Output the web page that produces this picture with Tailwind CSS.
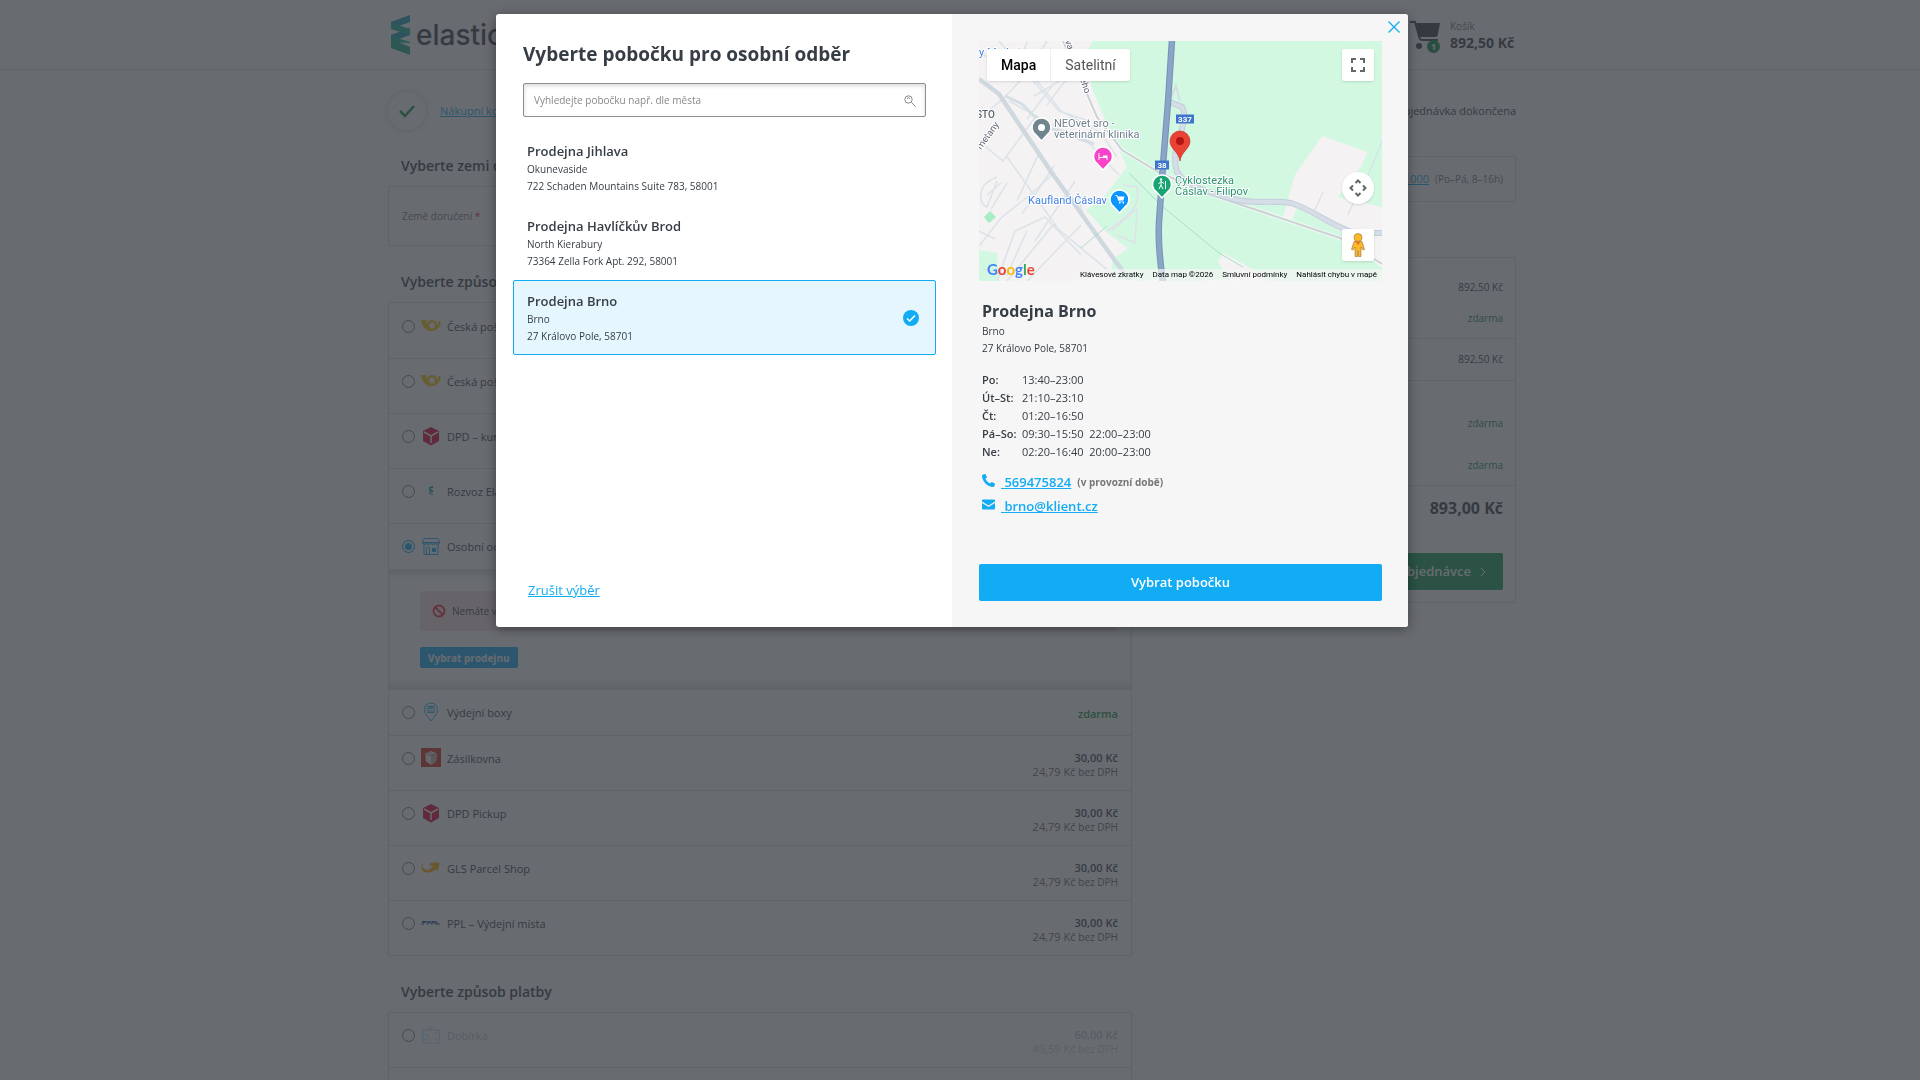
<!DOCTYPE html>
<html lang="cs">
<head>
  <meta charset="UTF-8" />
  <meta name="viewport" content="width=device-width, initial-scale=1.0" />
  <title>Doprava a platba</title>
  <script src="https://cdn.jsdelivr.net/npm/@tailwindcss/browser@4"></script>
</head>
<body class="h-screen overflow-hidden bg-white font-['Open_Sans','Noto_Sans',sans-serif] text-[11px] text-[#363d45]">

  <!-- Ikony dopravců -->
  <svg class="hidden">
    <symbol id="posta" viewBox="0 0 20 20"><path d="M0 4h5c.5 3 1 6 4 7l1 4C4 15 1 10 0 4z" fill="#ffc800"/><circle cx="11" cy="9.500" r="4.200" stroke="#ffc800" stroke-width="2.600" fill="none"/><path d="M13 13.500c4-1 5.500-4 5.500-8.500" stroke="#ffc800" stroke-width="2" fill="none"/></symbol>
    <symbol id="dpd" viewBox="0 0 20 20"><path d="M10 1l8 4v10l-8 4.500L2 15V5z" fill="#dc0032"/><path d="M3 6l7 4 7-4M10 10v7" stroke="#fff" stroke-width="1.500" fill="none"/></symbol>
    <symbol id="spirala" viewBox="0 0 20 20"><path d="M8 6l4-1v2l-4 1zM8 8l4 1v2l-4-1zM8 11l4-1v1l-4 1zM8 12l4 1v1l-4-1z" fill="#00a79d"/></symbol>
    <symbol id="obchod" viewBox="0 0 20 20"><path d="M3 2.500h14l1.500 4H1.500zM1.500 6.500c0 3 4 3 4 0 0 3 4.500 3 4.500 0 0 3 4.500 3 4.500 0 0 3 4 3 4 0M3 9v9.500h14V9M5.500 18v-5.500a1.500 1.500 0 0 1 3 0V18" stroke="#12acf4" fill="none"/><path d="M11 12h4v4h-4zM1.500 6h17v1.500h-17z" fill="#12acf4"/></symbol>
    <symbol id="box" viewBox="0 0 20 20"><path d="M10 19C6 14 3.500 11 3.500 7.500a6.500 6.500 0 0 1 13 0C16.500 11 14 14 10 19zM7 4.500h6v6H7zM9 4.500v2h2v-2M8.500 9h3" stroke="#12acf4" fill="none"/></symbol>
    <symbol id="zasilkovna" viewBox="0 0 20 20"><path d="M0 0h20v19H0z" fill="#d8281c"/><path d="M10 3l6 2.500-1 8-5 3.500-5-3.500-1-8z" fill="#f2eeee"/><path d="M10 8l6-2.500-1 8-5 3.500z" fill="#c9b3b1"/><path d="M4 5.500L10 8l6-2.500M7 4.200l6 2.600" stroke="#b55" stroke-width=".7" fill="none"/></symbol>
    <symbol id="gls" viewBox="0 0 20 20"><path d="M2 5C0 7-1 14.500 6 14.500h2c3 0 5-1.500 6.500-3L17 13l1.500-8.500H10l-2 3h4c-1.500 3-3.500 4.500-6 4.500C2.500 12 1 9 2 5z" fill="#ffb000"/></symbol>
    <symbol id="ppl" viewBox="0 0 20 20"><path d="M1 8.500h4l-.5 1H1M0 11h3M6 11.500l1-3h2.500l-.5 1.500H7M10.500 11.500l1-3H14l-.5 1.500H11M16 8.500l-1 2.500h4" stroke="#1b5a9c" stroke-width="1.200" fill="none"/></symbol>
    <symbol id="penezenka" viewBox="0 0 20 20"><path d="M2 5h16.500v13H2zM1 9.500h4a2 2 0 0 1 0 4.500H1zM6 5c0-3 4-3 4 0M10 4c1-3 5-2 5 1M14 8h2v2M16 13v2h-2" stroke="#12acf4" fill="none"/></symbol>
  </svg>

  <header class="h-[70px] border-b border-[#dfe1e3] pr-4">
    <div class="mx-auto flex h-full w-full max-w-[1128px] items-center justify-between">
      <a href="#" class="ml-[3px] flex items-center gap-1.5">
        <svg class="h-10 w-[19px]" viewBox="0 0 19 40"><path d="M0 7L19 0v7L0 14zM0 20l19-7v7L0 27z" fill="#12a0b8"/><path d="M0 8l19 6v6L0 14z" fill="#14b4a0"/><path d="M0 21l19 6v1L0 27z" fill="#14b4a0"/><path d="M0 24l19 8v8L0 33z" fill="#1bb08e"/></svg>
        <span class="font-[Inter] text-[28px] leading-8 font-medium">elastic</span>
      </a>
      <div class="flex w-[107px] items-center gap-2">
        <div class="relative">
          <svg class="h-9 w-[33px]" viewBox="0 0 33 36"><path d="M1 5h5l4 14c.5 3 1 4 4 4h15" stroke="#363d45" stroke-width="2" fill="none"/><path d="M6 6h25l-2 11c-.5 2-1 3-3 3H10z" fill="#363d45"/><circle cx="10" cy="29" r="3" fill="#363d45"/></svg>
          <span class="absolute right-0.5 bottom-0 grid size-[13px] place-items-center rounded-full bg-[#0c8a4b] text-[9px] font-bold text-white">1</span>
        </div>
        <div class="shrink-0 whitespace-nowrap">
          <div class="text-[10px] leading-4 text-[#777]">Košík</div>
          <div class="text-[14px] leading-[18px] font-bold">892,50 Kč</div>
        </div>
      </div>
    </div>
  </header>

  <div class="pr-4">
  <main class="mx-auto w-full max-w-[1128px] pt-[22px]">
    <div class="flex items-center justify-between">
      <div class="flex items-center gap-[14px]">
        <span class="grid size-[38px] place-items-center rounded-full bg-white shadow-[0_0_6px_#00000030]">
          <svg class="size-4" viewBox="0 0 16 16"><path d="M1 8l5 5L15 3" stroke="#12913f" stroke-width="2.500" fill="none"/></svg>
        </span>
        <a href="#" class="text-[#12acf4] underline">Nákupní košík</a>
      </div>
      <span>Objednávka dokončena</span>
    </div>

    <div class="flex items-start gap-[30px] pt-[26px]">
      <div class="w-[744px]">
        <h2 class="mb-2.5 ml-[13px] text-[14px] leading-5 font-semibold">Vyberte zemi doručení</h2>
        <div class="h-[60px] border border-[#dfe1e3] px-[13px] py-[22px] text-[10px] text-[#777]">Země doručení <span class="text-red-600">*</span></div>

        <h2 class="mt-[26px] mb-2.5 ml-[13px] text-[14px] leading-5 font-semibold">Vyberte způsob dopravy</h2>
        <div class="border-x border-t border-[#dfe1e3]">
          <div id="doprava" class="pt-px"></div>
          <div class="h-[120px] border-b border-[#dfe1e3] pt-[21px] pr-3.5 pl-[31px] shadow-[inset_0_9px_8px_-5px_#00000026,inset_0_-9px_8px_-5px_#00000026]">
            <div class="flex h-10 items-center gap-1.5 rounded-xs bg-[#fbe3e4] px-3 text-[10px]">
              <svg class="size-[14px]" viewBox="0 0 14 14"><circle cx="7" cy="7" r="5.500" stroke="#e2242c" stroke-width="1.800" fill="none"/><path d="M3 3l8 8" stroke="#e2242c" stroke-width="1.800"/></svg>
              Nemáte vybranou prodejnu
            </div>
            <button class="mt-4 h-[21px] rounded-xs bg-[#12acf4] px-2 text-[10px] leading-5 font-bold text-white">Vybrat prodejnu</button>
          </div>
          <div id="vydej"></div>
        </div>

        <h2 class="mt-[26px] mb-2.5 ml-[13px] text-[14px] leading-5 font-semibold">Vyberte způsob platby</h2>
        <div class="border-x border-t border-[#dfe1e3]" id="platba"></div>
      </div>

      <aside class="flex-1">
        <div class="flex h-[46px] items-center justify-end border border-[#dfe1e3] px-3 text-[10px] text-[#777]"><a href="#" class="mr-1.5 text-[11px] text-[#12acf4] underline">569 000 000</a> (Po–Pá, 8–16h)</div>
        <div class="mt-[55px] border border-[#dfe1e3] text-right text-[10px]">
          <div class="h-[81px] border-b border-[#dfe1e3] px-3 pt-[19px] leading-5">892,50 Kč<div class="mt-[11px] text-[#12913f]">zdarma</div></div>
          <div class="h-[42px] border-b border-[#dfe1e3] px-3 leading-[41px]">892,50 Kč</div>
          <div class="h-[105px] border-b border-[#dfe1e3] px-3 pt-8 leading-5 text-[#12913f]">zdarma<div class="mt-[22px]">zdarma</div></div>
          <div class="px-3 pt-3 pb-3">
            <div class="text-base leading-5 font-bold">893,00 Kč</div>
            <button class="mt-[35px] flex h-[37px] w-full items-center justify-end gap-2 rounded-xs bg-[#0c9a55] pr-4 text-[13px] font-semibold text-white">Pokračovat v objednávce
              <svg class="h-2.5 w-2" viewBox="0 0 8 10"><path d="M2 1l4 4-4 4" stroke="#fff" fill="none"/></svg></button>
          </div>
        </div>
      </aside>
    </div>
  </main>
  </div>

  <!-- Modal s výběrem pobočky -->
  <div class="fixed inset-0 flex items-start justify-center bg-[#363a40]/75 pt-3.5 pr-4">
    <div class="relative flex h-[613px] w-[912px] overflow-hidden rounded-[3px] bg-white shadow-[0_2px_12px_#00000066]">
      <section class="flex w-1/2 flex-col pr-4 pb-[27px] pl-[17px]">
        <h1 class="mx-2.5 mt-[26px] text-[19px] leading-7 font-bold">Vyberte pobočku pro osobní odběr</h1>
        <div class="relative mx-2.5 mt-[15px]">
          <input type="text" aria-label="Hledat pobočku" placeholder="Vyhledejte pobočku např. dle města" class="block h-[34px] w-full rounded-xs border border-[#8b8f93] px-2.5 text-[10px] shadow-[inset_0_2px_4px_#00000026] placeholder:text-[#888]" />
          <svg class="absolute top-3 right-2.5 size-3" viewBox="0 0 12 12"><circle cx="4.500" cy="4.500" r="3.700" stroke="#888" fill="none"/><path d="M7.500 7.500L11.500 11.500M3 3.500q2-2 3 .5" stroke="#888" fill="none"/></svg>
        </div>
        <div id="pobocky" class="mt-[13px]"></div>
        <a href="#" class="mt-auto ml-[15px] self-start text-[13px] leading-5 text-[#12acf4] underline">Zrušit výběr</a>
      </section>

      <section class="flex w-1/2 flex-col bg-[#f6f6f6] pt-[27px] pr-[26px] pb-[26px] pl-[27px]">
        <button aria-label="Zavřít" class="absolute top-[7px] right-2"><svg class="size-3" viewBox="0 0 12 12"><path d="M.5.5l11 11M11.500.5l-11 11" stroke="#12acf4" stroke-width="1.300"/></svg></button>

        <div class="relative h-[240px] overflow-hidden font-[Roboto]">
          <svg class="h-full w-full" viewBox="0 0 403 240" preserveAspectRatio="xMinYMin slice">
            <path d="M0 0h403v240H0z" fill="#f4f2f3"/>
            <path d="M114 0l-8 14 7 33 11 27 14 30 10 22-24 31-17 12 20 22 22 16-16 12v21h270V0z" fill="#d2f8e1"/>
            <path d="M343 95l46 16-8 16-22 29 44 10v61l-35-33-50-27-5 12-9-3 12-42zM244 212l28 15 19 13h-40l-12-19z" fill="#f4f2f3"/>
            <path d="M0 209l18 3 2 28H0z" fill="#d2f8e1"/>
            <path d="M5 176l6-6 6 6-7 6z" fill="#a6ecc4"/>
            <!-- vedlejší ulice -->
            <g stroke="#dde3e9" stroke-width="1.600" fill="none">
              <path d="M0 78l26-22 22-24 20-32M20 0l60 70 30 10M48 0l-6 20 40 50 40 22 16 24M30 60l50 28 24 8 36 38M55 55l34-20 18 0M0 12l30 14M74 44L48 78M95 28L68 64M0 100l24 20 34-46M28 116l50 70M60 112l-22 48M75 125l-32 48M96 140l-40 60M0 205l22-28 30-24 24-22M18 240l18-50 30-14 36 38M0 190l16 8M48 240l54-56M28 240l46-56 68 56M4 228l24 6 20-44M98 152l8 28"/>
              <path d="M18 136c-22 8-18 28-10 30l10-26M12 168l16-26M8 154l14-12"/>
              <path d="M128 190c22-16 34-22 30-44l-14-2M132 190l26-22-2 34-18-8"/>
            </g>
            <path d="M0 38l20 15L34 74l39 58 26 36 30 42 22 30" stroke="#ced8de" stroke-width="4.500" fill="none"/>
            <path d="M26 55l17 8 22 22 50 18" stroke="#d5dee4" stroke-width="3" fill="none"/>
            <path d="M84 0l18 39 16 37 25 33 38 23 58 24 122 41 42 26" stroke="#fff" stroke-width="4" fill="none" opacity=".6"/>
            <path d="M84 0l18 39 16 37 25 33 38 23 58 24 122 41 42 26" stroke="#cdd0d5" stroke-width="2" fill="none"/>
            <path d="M150 132l34 34 56 46 24 14M102 207l26-22" stroke="#a8dfc8" fill="none"/>
            <path d="M403 101l-16 38M344 151l-8 18M375 160l-6 14" stroke="#d3dbe6" fill="none"/>
            <path d="M191 61l12 5c4 6 2 18-2 28-5 12-6 26-3 37 8 14 30 20 60 28 20 4 36 0 54 3 22 7 36 20 58 28 10 3 20 2 33 2" stroke="#c4cddb" stroke-width="6" fill="none"/>
            <path d="M191 61l12 5c4 6 2 18-2 28-5 12-6 26-3 37 8 14 30 20 60 28 20 4 36 0 54 3 22 7 36 20 58 28 10 3 20 2 33 2" stroke="#d5dde7" stroke-width="4" fill="none"/>
            <path d="M190 62l7-17 4 15" stroke="#d5dde7" stroke-width="2" fill="none"/>
            <path d="M193-1l-4 62-5 63-4 57c-1 20 1 40 4 60" stroke="#7592b8" stroke-width="6.500" fill="none"/>
            <path d="M193-1l-4 62-5 63-4 57c-1 20 1 40 4 60" stroke="#8ba5c7" stroke-width="4.500" fill="none"/>
            <!-- popisky -->
            <g font-size="11" stroke="#fff" stroke-width="2" paint-order="stroke">
              <text x="75" y="86" fill="#6f8290">NEOvet sro -</text>
              <text x="75" y="97" fill="#6f8290">veterinární klinika</text>
              <text x="49" y="163" fill="#3f7fe8">Kaufland Čáslav</text>
              <text x="196" y="143" fill="#2a9470">Cyklostezka</text>
              <text x="196" y="154" fill="#2a9470">Čáslav - Filipov</text>
              <text x="-6" y="15" fill="#3f7fe8">ny Market</text>
              <text x="-3" y="77" font-size="10" font-weight="500" fill="#555f6a">STO</text>
              <text font-size="9.500" fill="#667" transform="translate(2 109) rotate(-54)">metany</text>
              <text font-size="9.500" fill="#667" transform="translate(101 38) rotate(72)">ého</text>
              <text font-size="9.500" fill="#667" transform="translate(86 0) rotate(72)">va</text>
              <text x="137" y="248" fill="#bd8cf0">Národní muzeum dělského</text>
            </g>
            <path d="M197 73.500h18v9h-18zM176 119.500h14v9h-14z" fill="#3d74cc"/>
            <g font-size="8" font-weight="700" fill="#fff" text-anchor="middle"><text x="206" y="81">337</text><text x="183" y="127">38</text></g>
            <!-- značky -->
            <g stroke="#fff" stroke-width="1.500">
              <path d="M62.500 100l-5-5.500a9.500 9.500 0 1 1 10 0z" fill="#71858f"/>
              <path d="M124 129l-5-5.500a9.500 9.500 0 1 1 10 0z" fill="#f943c8"/>
              <path d="M140.500 172l-5-5.500a9.500 9.500 0 1 1 10 0z" fill="#0b95ff"/>
              <path d="M183 157l-5-5.500a9.500 9.500 0 1 1 10 0z" fill="#16a571"/>
            </g>
            <circle cx="62.500" cy="86.500" r="3.500" fill="#fff"/>
            <path d="M119.500 112v7h1v-2h7v2h1v-4.500h-4.500v1.500h-3.500v-4z" fill="#fff"/>
            <path d="M136.500 154.500h1.500l2 5.500h4.500" stroke="#fff" fill="none"/><path d="M138.500 155.500h7l-1 3.500h-5zM140 161h1.500v1.500H140zM143.500 161h1.500v1.500h-1.500z" fill="#fff"/>
            <path d="M182 140v4l-2 4M182 144l2 4M179.500 143l2.500-2.500 3 2M186.500 140v8" stroke="#fff" fill="none"/><circle cx="182" cy="138.500" r="1.200" fill="#fff"/>
            <path d="M201 120c-1-9-10-12-10-20a10 10 0 0 1 20 0c0 8-9 11-10 20z" fill="#ea4335" stroke="#c5221f" stroke-width=".6"/>
            <circle cx="201" cy="100" r="4" fill="#b31412"/>
          </svg>

          <div class="absolute top-2 left-2 flex h-8 rounded-xs bg-white text-[14px] shadow-sm">
            <button class="border-r border-[#eee] px-3.5 font-medium text-black">Mapa</button>
            <button class="px-3.5 text-[#565656]">Satelitní</button>
          </div>
          <button aria-label="Celá obrazovka" class="absolute top-2 right-2 grid size-8 place-items-center rounded-xs bg-white shadow-sm"><svg class="size-[14px]" viewBox="0 0 14 14"><path d="M1 5V1h4M9 1h4v4M13 9v4H9M5 13H1V9" stroke="#666" stroke-width="2" fill="none"/></svg></button>
          <button aria-label="Ovládání kamery" class="absolute right-2 bottom-[77px] grid size-8 place-items-center rounded-full bg-white shadow-sm"><svg class="size-[18px]" viewBox="0 0 18 18"><path d="M6.500 4L9 1.500 11.500 4M6.500 14L9 16.500l2.500-2.500M4 6.500L1.500 9 4 11.500M14 6.500L16.500 9 14 11.500" stroke="#666" stroke-width="2" fill="none"/></svg></button>
          <button aria-label="Street View" class="absolute right-2 bottom-5 grid size-8 place-items-center rounded-xs bg-white shadow-sm"><svg class="h-6 w-4" viewBox="0 0 16 24"><path d="M4 8.500h8l2.500 8-1.500.5-2-3v9.500H8.500V18h-1v5.500H5V14l-2 3-1.500-.5z" fill="#fbb829" stroke="#9a7433" stroke-width=".6"/><circle cx="8" cy="4.500" r="4" fill="#fbb829" stroke="#9a7433" stroke-width=".6"/><path d="M5 8.500h6L8 12z" fill="#e8762d"/></svg></button>
          <a href="#" class="absolute bottom-0.5 left-2 font-[Lato] text-[15px] leading-5 font-bold"><span class="text-[#4285f4]">G</span><span class="text-[#ea4335]">o</span><span class="text-[#fbbc04]">o</span><span class="text-[#4285f4]">g</span><span class="text-[#34a853]">l</span><span class="text-[#ea4335]">e</span></a>
          <div class="absolute right-0 bottom-0 flex h-3 gap-[9px] bg-[#f5f5f5]/70 px-[5px] text-[8px] leading-3 whitespace-nowrap text-black"><a href="#">Klávesové zkratky</a><span>Data map ©2026</span><a href="#">Smluvní podmínky</a><a href="#">Nahlásit chybu v mapě</a></div>
        </div>

        <div class="px-[3px] pt-[18px]">
          <h2 class="text-base leading-6 font-bold">Prodejna Brno</h2>
          <p class="text-[10px] leading-[17px]">Brno<br />27 Královo Pole, 58701</p>
          <table class="mt-3.5 leading-[18px]">
            <tbody>
              <tr><th class="w-10 p-0 text-left font-semibold whitespace-nowrap">Po:</th><td>13:40–23:00</td></tr>
              <tr><th class="w-10 p-0 text-left font-semibold whitespace-nowrap">Út–St:</th><td>21:10–23:10</td></tr>
              <tr><th class="w-10 p-0 text-left font-semibold whitespace-nowrap">Čt:</th><td>01:20–16:50</td></tr>
              <tr><th class="w-10 p-0 text-left font-semibold whitespace-nowrap">Pá–So:</th><td>09:30–15:50&nbsp; 22:00–23:00</td></tr>
              <tr><th class="w-10 p-0 text-left font-semibold whitespace-nowrap">Ne:</th><td>02:20–16:40&nbsp; 20:00–23:00</td></tr>
            </tbody>
          </table>
          <p class="mt-[9px] flex items-center text-[13px] leading-6 font-semibold">
            <svg class="mr-1.5 mb-1 size-[13px]" viewBox="0 0 13 13"><path d="M1 .5L3.500 0l1.500 3.500-1.500 1.200c.7 2 2.500 4 4.800 4.800L9.500 8 13 9.500l-.5 2.500-1 1C5 13 0 7 0 1.500z" fill="#12acf4"/></svg>
            <a href="#" class="text-[#12acf4] underline">&nbsp;569475824</a><span class="ml-1.5 text-[10px] font-bold text-[#777]">(v provozní době)</span>
          </p>
          <p class="flex items-center text-[13px] leading-6 font-semibold">
            <svg class="mr-1.5 mb-1 size-[13px]" viewBox="0 0 13 13"><path d="M1 1.500h11a1 1 0 0 1 1 1v1L6.500 7.500 0 3.500v-1a1 1 0 0 1 1-1zM0 5l6.500 4L13 5v5.500a1 1 0 0 1-1 1H1a1 1 0 0 1-1-1z" fill="#12acf4"/></svg>
            <a href="#" class="text-[#12acf4] underline">&nbsp;brno@klient.cz</a>
          </p>
        </div>
        <button class="mt-auto h-[37px] rounded-xs bg-[#12acf4] text-[13px] font-semibold text-white">Vybrat pobočku</button>
      </section>
    </div>
  </div>

  <script>
    const pobocky = [
      ["Prodejna Jihlava", "Okunevaside", "722 Schaden Mountains Suite 783, 58001"],
      ["Prodejna Havlíčkův Brod", "North Kierabury", "73364 Zella Fork Apt. 292, 58001"],
      ["Prodejna Brno", "Brno", "27 Královo Pole, 58701", true]
    ];

    document.getElementById("pobocky").innerHTML = pobocky.map(([nazev, mesto, adresa, vybrana]) => `
      <button class="flex h-[75px] w-full items-center justify-between rounded-xs border px-[13px] text-left ${vybrana ? "border-[#12acf4] bg-[#e6f6fe]" : "border-transparent"}">
        <span class="flex flex-col text-[10px] leading-[17px]"><b class="text-[13px] leading-5 font-semibold">${nazev}</b><span>${mesto}</span><span>${adresa}</span></span>
        ${vybrana ? '<svg class="mr-[3px] size-4" viewBox="0 0 16 16"><circle cx="8" cy="8" r="8" fill="#12acf4"/><path d="M4 8.500l2.700 2.500L12 5.500" stroke="#fff" stroke-width="1.500" fill="none"/></svg>' : ""}
      </button>`).join("");

    function radek(skupina, [ikona, nazev, cena, bezDph, volba]) {
      const vyska = volba === "nizky" || volba === "vybrany" ? "h-[46px]" : "h-[55px]";
      const barva = volba === "neaktivni" ? "opacity-30" : "";
      return `
        <label class="flex ${vyska} items-start border-b border-[#dfe1e3] px-[13px] pt-3">
          <input type="radio" name="${skupina}" ${volba === "vybrany" ? "checked" : ""} class="mt-1 size-[13px] appearance-none rounded-full border border-[#777] checked:border-[#12acf4] checked:bg-[#12acf4] checked:shadow-[inset_0_0_0_2px_#fff]" />
          <svg class="ml-1.5 size-5 ${barva}"><use href="#${ikona}" /></svg>
          <span class="ml-1.5 leading-[22px] ${barva}">${nazev}</span>
          <span class="ml-auto pt-[3px] text-right leading-[14px] ${barva}">
            <b class="block font-semibold ${cena === "zdarma" ? "pt-0.5 text-[#12913f]" : ""}">${cena}</b>
            ${bezDph ? `<span class="text-[#666]">${bezDph} Kč <small class="text-[10px]">bez DPH</small></span>` : ""}
          </span>
        </label>`;
    }

    document.getElementById("doprava").innerHTML = [
      ["posta", "Česká pošta – Balík Do ruky", "30,00 Kč", "24,79"],
      ["posta", "Česká pošta – Balík Na poštu", "30,00 Kč", "24,79"],
      ["dpd", "DPD – kurýr", "30,00 Kč", "24,79"],
      ["spirala", "Rozvoz Elastic", "30,00 Kč", "24,79"],
      ["obchod", "Osobní odběr", "zdarma", "", "vybrany"]
    ].map(r => radek("doprava", r)).join("");

    document.getElementById("vydej").innerHTML = [
      ["box", "Výdejní boxy", "zdarma", "", "nizky"],
      ["zasilkovna", "Zásilkovna", "30,00 Kč", "24,79"],
      ["dpd", "DPD Pickup", "30,00 Kč", "24,79"],
      ["gls", "GLS Parcel Shop", "30,00 Kč", "24,79"],
      ["ppl", "PPL – Výdejní místa", "30,00 Kč", "24,79"]
    ].map(r => radek("doprava", r)).join("");

    document.getElementById("platba").innerHTML = [
      ["penezenka", "Dobírka", "60,00 Kč", "49,59", "neaktivni"],
      ["penezenka", "Převodem", "zdarma", ""]
    ].map(r => radek("platba", r)).join("");
  </script>
</body>
</html>
